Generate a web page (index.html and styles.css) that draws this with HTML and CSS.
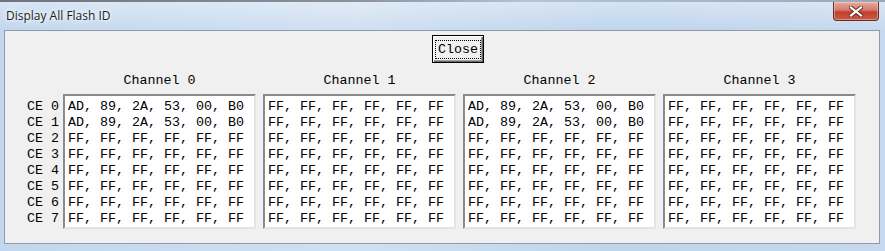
FILE: index.html
```html
<!DOCTYPE html>
<html lang="en">
<head>
  <meta charset="UTF-8">
  <title>Display All Flash ID</title>
  <link rel="stylesheet" href="styles.css">
</head>
<body>
  <div class="window">
    <div class="top-edge"></div>
    <div class="titlebar">
      <span class="title">Display All Flash ID</span>
      <button class="win-close" type="button">
        <svg width="14" height="11" viewBox="0 0 14 11">
          <path d="M2 1.5 L12 9.5 M12 1.5 L2 9.5" stroke="#5a2a24" stroke-width="4" stroke-linecap="square"/>
          <path d="M2 1.5 L12 9.5 M12 1.5 L2 9.5" stroke="#fff" stroke-width="2.2" stroke-linecap="square"/>
        </svg>
      </button>
    </div>
    <div class="client">
      <div class="button-row">
        <button class="btn-close" type="button"><span>Close</span></button>
      </div>
      <div class="grid">
        <div></div>
        <div class="ch-label">Channel 0</div>
        <div class="ch-label">Channel 1</div>
        <div class="ch-label">Channel 2</div>
        <div class="ch-label">Channel 3</div>

        <div class="ce-labels">
          <div>CE 0</div><div>CE 1</div><div>CE 2</div><div>CE 3</div>
          <div>CE 4</div><div>CE 5</div><div>CE 6</div><div>CE 7</div>
        </div>
        <div class="box">
          <div>AD, 89, 2A, 53, 00, B0</div>
          <div>AD, 89, 2A, 53, 00, B0</div>
          <div>FF, FF, FF, FF, FF, FF</div>
          <div>FF, FF, FF, FF, FF, FF</div>
          <div>FF, FF, FF, FF, FF, FF</div>
          <div>FF, FF, FF, FF, FF, FF</div>
          <div>FF, FF, FF, FF, FF, FF</div>
          <div>FF, FF, FF, FF, FF, FF</div>
        </div>
        <div class="box">
          <div>FF, FF, FF, FF, FF, FF</div>
          <div>FF, FF, FF, FF, FF, FF</div>
          <div>FF, FF, FF, FF, FF, FF</div>
          <div>FF, FF, FF, FF, FF, FF</div>
          <div>FF, FF, FF, FF, FF, FF</div>
          <div>FF, FF, FF, FF, FF, FF</div>
          <div>FF, FF, FF, FF, FF, FF</div>
          <div>FF, FF, FF, FF, FF, FF</div>
        </div>
        <div class="box">
          <div>AD, 89, 2A, 53, 00, B0</div>
          <div>AD, 89, 2A, 53, 00, B0</div>
          <div>FF, FF, FF, FF, FF, FF</div>
          <div>FF, FF, FF, FF, FF, FF</div>
          <div>FF, FF, FF, FF, FF, FF</div>
          <div>FF, FF, FF, FF, FF, FF</div>
          <div>FF, FF, FF, FF, FF, FF</div>
          <div>FF, FF, FF, FF, FF, FF</div>
        </div>
        <div class="box">
          <div>FF, FF, FF, FF, FF, FF</div>
          <div>FF, FF, FF, FF, FF, FF</div>
          <div>FF, FF, FF, FF, FF, FF</div>
          <div>FF, FF, FF, FF, FF, FF</div>
          <div>FF, FF, FF, FF, FF, FF</div>
          <div>FF, FF, FF, FF, FF, FF</div>
          <div>FF, FF, FF, FF, FF, FF</div>
          <div>FF, FF, FF, FF, FF, FF</div>
        </div>
      </div>
    </div>
  </div>
</body>
</html>
```

FILE: styles.css
```css
body {
  margin: 0;
  padding: 0;
  background: #c9dcf0;
}
.window {
  width: 885px;
  height: 251px;
  overflow: hidden;
  background: linear-gradient(90deg, #c2d7ee 0%, #cfe0f2 40%, #bfd5ec 70%, #c6d9ee 100%);
}
.top-edge {
  height: 2px;
  background: linear-gradient(90deg, #6d7480 0%, #8a929c 40%, #b6c4d4 60%, #9aa6b4 100%);
}
.titlebar {
  height: 28px;
  display: flex;
  align-items: flex-start;
  justify-content: space-between;
  background: linear-gradient(180deg, rgba(255,255,255,0.35) 0%, rgba(255,255,255,0) 100%);
}
.title {
  font-family: "Open Sans", "Noto Sans", sans-serif;
  font-size: 12px;
  color: #1e1e1e;
  margin: 5px 0 0 6px;
  text-shadow: 0 0 6px #fff, 0 0 4px #fff;
}
.win-close {
  width: 46px;
  height: 19px;
  margin: 0 6px 0 0;
  padding: 0;
  border: 1px solid #6b2c26;
  border-top: none;
  border-radius: 0 0 4px 4px;
  background: linear-gradient(180deg, #e9a99c 0%, #d47a6a 45%, #c0402c 55%, #c85a44 100%);
  display: flex;
  align-items: center;
  justify-content: center;
  box-shadow: inset 0 0 0 1px rgba(255,255,255,0.35);
}
.client {
  margin: 0 5px 0 4px;
  height: 212px;
  border: 1px solid #8e9aa8;
  background: #f0f0f0;
  font-family: "Liberation Mono", "Courier New", monospace;
  font-size: 13.33px;
  color: #000;
}
.button-row {
  padding: 4px 0 0 427px;
  height: 30px;
}
.btn-close {
  width: 52px;
  height: 28px;
  padding: 0;
  border: 1px solid #000;
  background: #f0f0f0;
  box-shadow: inset 1px 1px 0 #fff, inset -1px -1px 0 #696969, inset -2px -2px 0 #a0a0a0;
  font-family: "Liberation Mono", "Courier New", monospace;
  font-size: 13.33px;
  color: #000;
}
.btn-close span {
  display: inline-block;
  padding: 1px 2px;
  outline: 1px dotted #000;
}
.grid {
  display: grid;
  grid-template-columns: 51px 193px 193px 193px 193px;
  column-gap: 7px;
  padding-top: 9px;
}
.ch-label {
  text-align: center;
  height: 20px;
  line-height: 14px;
}
.ce-labels {
  padding-top: 5px;
  line-height: 16px;
  text-align: right;
  margin-right: -3px;
  white-space: nowrap;
}
.box {
  height: 128px;
  background: #fff;
  border-top: 2px solid #8a8a8a;
  border-left: 2px solid #8a8a8a;
  border-right: 2px solid #e4e4e4;
  border-bottom: 2px solid #e4e4e4;
  padding: 3px 0 0 3px;
  line-height: 16px;
  white-space: nowrap;
}
```
